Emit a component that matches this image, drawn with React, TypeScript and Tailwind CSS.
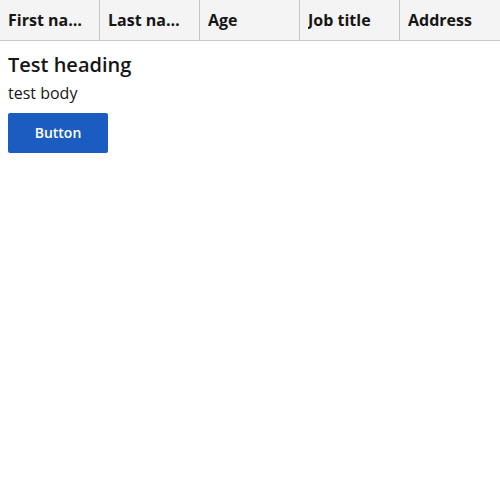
import React from "react";

export default function App() {
  const cols = ["First name", "Last name", "Age", "Job title", "Address"];
  return (
    <div className="w-[500px] h-[500px] bg-white text-[#161616]" style={{ fontFamily: '"Open Sans", sans-serif' }}>
      <div className="flex h-[41px] bg-[#f4f4f4] border-b border-[#c6c6c6]">
        {cols.map((c, i) => (
          <div
            key={c}
            className={`w-[100px] flex items-center px-2 text-base font-bold overflow-hidden ${i < 4 ? "border-r border-[#c6c6c6]" : ""}`}
          >
            <span className="truncate">{c}</span>
          </div>
        ))}
      </div>
      <div className="px-2 pt-[10px]">
        <h1 className="text-[20px] leading-[28px] font-semibold">Test heading</h1>
        <p className="text-base leading-[24px] mt-[2px]">test body</p>
        <button className="mt-[8px] w-[100px] h-[40px] bg-[#1a5cbf] text-white text-sm font-semibold rounded-[2px]">
          Button
        </button>
      </div>
    </div>
  );
}
